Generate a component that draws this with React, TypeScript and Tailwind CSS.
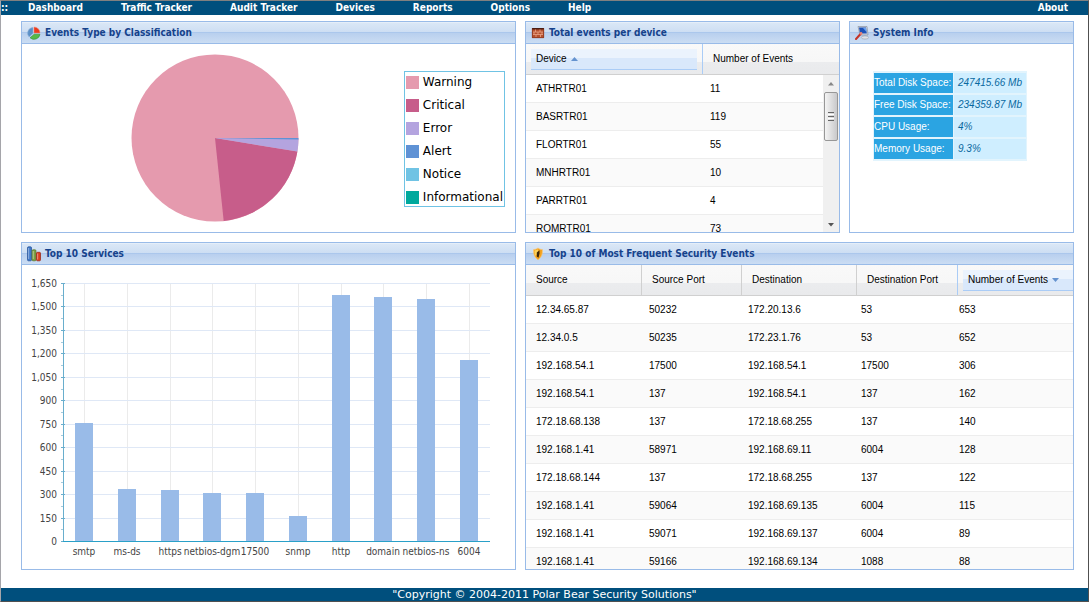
import type { ReactNode } from "react";
import clsx from "clsx";

const NAV = ["Dashboard", "Traffic Tracker", "Audit Tracker", "Devices", "Reports", "Options", "Help"];

const LEGEND = [
  { label: "Warning", color: "bg-[#e59aae]" },
  { label: "Critical", color: "bg-[#c75d8a]" },
  { label: "Error", color: "bg-[#b4a4df]" },
  { label: "Alert", color: "bg-[#5f92d5]" },
  { label: "Notice", color: "bg-[#70c3e4]" },
  { label: "Informational", color: "bg-[#00a99d]" },
];

const DEVICES = [
  ["ATHRTR01", 11],
  ["BASRTR01", 119],
  ["FLORTR01", 55],
  ["MNHRTR01", 10],
  ["PARRTR01", 4],
  ["ROMRTR01", 73],
];

const SYSTEM = [
  ["Total Disk Space:", "247415.66 Mb"],
  ["Free Disk Space:", "234359.87 Mb"],
  ["CPU Usage:", "4%"],
  ["Memory Usage:", "9.3%"],
];

const SERVICES = [
  { name: "smtp", value: 755 },
  { name: "ms-ds", value: 333 },
  { name: "https", value: 326 },
  { name: "netbios-dgm", value: 307 },
  { name: "17500", value: 307 },
  { name: "snmp", value: 160 },
  { name: "http", value: 1573 },
  { name: "domain", value: 1560 },
  { name: "netbios-ns", value: 1548 },
  { name: "6004", value: 1158 },
];

const EVENTS = [
  ["12.34.65.87", "50232", "172.20.13.6", "53", "653"],
  ["12.34.0.5", "50235", "172.23.1.76", "53", "652"],
  ["192.168.54.1", "17500", "192.168.54.1", "17500", "306"],
  ["192.168.54.1", "137", "192.168.54.1", "137", "162"],
  ["172.18.68.138", "137", "172.18.68.255", "137", "140"],
  ["192.168.1.41", "58971", "192.168.69.11", "6004", "128"],
  ["172.18.68.144", "137", "172.18.68.255", "137", "122"],
  ["192.168.1.41", "59064", "192.168.69.135", "6004", "115"],
  ["192.168.1.41", "59071", "192.168.69.137", "6004", "89"],
  ["192.168.1.41", "59166", "192.168.69.134", "1088", "88"],
];

function PieIcon() {
  return (
    <svg viewBox="0 0 14 14" className="h-3.5 w-3.5" aria-hidden="true">
      <path d="M6 1.5A5.6 5.6 0 0 0 2.2 11L6 7.2Z" fill="#5b8fc6" stroke="#8eb4dc" strokeWidth=".6" />
      <path d="M7 1v6h6A6 6 0 0 0 7 1Z" fill="#ea3a1e" stroke="#f58a72" strokeWidth=".5" />
      <path d="M7.2 8.2 3 11.8a6 6 0 0 0 10-3.6Z" fill="#55b948" stroke="#2f8a35" strokeWidth=".5" />
    </svg>
  );
}

function FirewallIcon() {
  return (
    <svg viewBox="0 0 14 14" className="h-3.5 w-3.5" aria-hidden="true">
      <path d="M1 2h12v10H1z" fill="#b5512f" />
      <path d="M1 2h12v1.5H1z" fill="#4a1d12" />
      <path d="M2 6h10M2 8.5h10M4.5 3.5V6M9 3.5V6M7 6v2.5M11 6v2.5M3 6v2.5M5 8.5V11M9.5 8.5V11" stroke="#eba387" strokeWidth=".8" />
      <path d="M1.3 2.3v9.4h11.4V2.3" fill="none" stroke="#7c2f1b" strokeWidth=".6" />
    </svg>
  );
}

function MonitorIcon() {
  return (
    <svg viewBox="0 0 14 14" className="h-3.5 w-3.5" aria-hidden="true">
      <path d="M3 .5h9l1 8.500H5Z" fill="#d5d9e2" stroke="#7d8696" strokeWidth=".6" />
      <path d="M4 1.500h7l.8 6H5Z" fill="#1c52b8" />
      <path d="M8 2h3l.5 4Z" fill="#69a3ef" />
      <ellipse cx="10" cy="11.5" rx="3.7" ry="1.6" fill="#dfe2e8" stroke="#8d94a1" strokeWidth=".5" />
      <path d="m1 13 4.5-5" stroke="#c43328" strokeWidth="2" strokeLinecap="round" />
      <circle cx="6" cy="7.4" r="1.4" fill="#e88478" />
    </svg>
  );
}

function BarsIcon() {
  return (
    <svg viewBox="0 0 14 16" className="h-4 w-3.5" aria-hidden="true">
      <rect x=".5" y=".8" width="4" height="14" rx="1" fill="#3f78c9" stroke="#234f93" strokeWidth=".7" />
      <rect x="5" y="3.8" width="4" height="11" rx="1" fill="#7d9f45" stroke="#56752b" strokeWidth=".7" />
      <rect x="9.5" y="6.3" width="4" height="8.5" rx="1" fill="#dc3d1c" stroke="#95230f" strokeWidth=".7" />
      <path d="M1.7 2v11M6.2 5v8M10.7 7.5v6" stroke="#fff" strokeOpacity=".45" />
    </svg>
  );
}

function ShieldIcon() {
  return (
    <svg viewBox="0 0 14 14" className="h-3.5 w-3.5" aria-hidden="true">
      <path d="M7 1c1.600 1.100 2.800 1.500 4.400 1.500.4 5-1.200 8.200-4.400 10.400C3.800 10.700 2.200 7.500 2.600 2.500 4.200 2.500 5.400 2.100 7 1Z" fill="#f2a01c" stroke="#f9c978" strokeWidth=".7" />
      <path d="M3.500 3.500C5 3.500 6 3 7 2.300V6L4.500 9C3.600 7.300 3.400 5.500 3.500 3.500Z" fill="#fcd15a" />
      <path d="M5.800 5.500 8.500 3.200V6.500L7.500 10.800 5.800 9.500Z" fill="#3b2508" />
    </svg>
  );
}

function Panel({ title, icon, className, children }: { title: string; icon: ReactNode; className?: string; children: ReactNode }) {
  return (
    <section className={clsx("flex min-w-0 flex-col overflow-hidden border border-[#99bbe8] bg-white", className)}>
      <header className="flex h-[22px] shrink-0 items-center gap-1 border-b border-[#99bbe8] bg-[linear-gradient(#f0f5fb_0,#dae7f6_1px,#cddef3_10px,#abc7ec_10px,#abc7ec_11px,#b8cfee_11px,#cbddf3_100%)] pl-[5px]">
        {icon}
        <h2 className="font-['DejaVu_Sans_Condensed','DejaVu_Sans',sans-serif] text-[10px] leading-4 font-bold whitespace-nowrap text-[#15428b]">
          {title}
        </h2>
      </header>
      {children}
    </section>
  );
}

function ColumnHeader({ label, sort }: { label: string; sort?: "asc" | "desc" }) {
  return (
    <th
      scope="col"
      aria-sort={sort === "asc" ? "ascending" : sort === "desc" ? "descending" : undefined}
      className={clsx(
        "flex items-center border-r px-[5px] font-normal last:border-r-0 last:pr-0",
        sort === "asc" ? "border-[#aaccf6]" : "border-[#d0d0d0] nth-4:border-[#aaccf6]",
      )}
    >
      <button
        type="button"
        className={clsx(
          "flex h-[21px] w-full items-center gap-1 border-b pl-[5px] text-left whitespace-nowrap",
          sort ? "border-[#aaccf6] bg-[linear-gradient(#ebf3fd_45%,#d9e8fb_45%)]" : "border-transparent",
        )}
      >
        {label}
        {sort && (
          <svg viewBox="0 0 7 4" className="h-1 w-[7px]" aria-hidden="true">
            <path d={sort === "asc" ? "M0 4 3.5 0 7 4Z" : "M0 0h7L3.5 4Z"} fill="#6593cf" />
          </svg>
        )}
      </button>
    </th>
  );
}

const headClass = "h-[31px] border-b border-[#d0d0d0] bg-[linear-gradient(#f9f9f9_0,#f7f7f7_60%,#ebecee_60%,#e9eaec_100%)]";
const rowClass = "h-7 items-center border-b border-[#ededed] even:bg-[#fafafa]";

function Pie() {
  return (
    <svg viewBox="0 0 168 168" className="h-[168px] w-[168px]" role="img" aria-label="Events by classification">
      <circle cx="84" cy="84" r="83.5" fill="#e59aae" />
      <path d="M84 84 166.4 97.5A83.5 83.5 0 0 1 92.7 167Z" fill="#c75d8a" />
      <path d="M84 84 167.5 85A83.5 83.5 0 0 1 166.4 97.5Z" fill="#b4a4df" />
      <path d="M84 84H167.5V85.5Z" fill="#5f92d5" />
    </svg>
  );
}

function ServicesChart() {
  const left = 41;
  const bottom = 276;
  const scale = 258 / 1650;
  const step = 42.7;
  const ticks = Array.from({ length: 12 }, (_, i) => i * 150);
  const y = (v: number) => Math.round(bottom - v * scale);
  const x = (i: number) => Math.round(left + step * (i + 0.5));

  return (
    <svg
      viewBox="0 0 493 304"
      preserveAspectRatio="xMinYMin"
      className="h-[304px] w-full font-['DejaVu_Sans_Condensed','DejaVu_Sans',sans-serif] text-[10px]"
      role="img"
      aria-label="Top 10 services"
    >
      <g shapeRendering="crispEdges">
        {SERVICES.map((s, i) => (
          <rect key={s.name} x={x(i)} y={18} width={1} height={258} fill="#ebebeb" />
        ))}
        {ticks.map((t) => (
          <g key={t}>
            <rect x={left} y={y(t)} width={427} height={1} fill="#dfe8f6" />
            <rect x={left - 2} y={y(t)} width={4} height={1} fill="#69aecd" />
            {t < 1650 && <rect x={left - 2} y={y(t + 75)} width={2} height={1} fill="#a5cbdc" />}
          </g>
        ))}
        {SERVICES.map((s, i) => (
          <rect key={s.name} x={x(i) - 9} y={y(s.value)} width={18} height={bottom - y(s.value)} fill="#99bbe8" />
        ))}
        <rect x={left} y={18} width={1} height={259} fill="#69aecd" />
        <rect x={left} y={bottom} width={427} height={1} fill="#2aa0c8" />
      </g>
      {ticks.map((t) => (
        <text key={t} x={left - 6} y={y(t) + 4} textAnchor="end" fill="#444">
          {t.toLocaleString("en-US")}
        </text>
      ))}
      {SERVICES.map((s, i) => (
        <text key={s.name} x={x(i)} y={290} textAnchor="middle" fill="#444">
          {s.name}
        </text>
      ))}
    </svg>
  );
}

function Scrollbar() {
  return (
    <div className="absolute top-[31px] right-0 bottom-0 flex w-4 flex-col items-center bg-[#f0f0f0]" aria-hidden="true">
      <svg viewBox="0 0 16 17" className="h-[17px] w-4">
        <path d="M5 10.5 8 7l3 3.5Z" fill="#888" />
      </svg>
      <div className="flex h-[49px] w-3.5 flex-col items-center justify-center gap-px rounded-xs border border-[#979797] bg-linear-to-r from-[#f4f4f4] to-[#c9c9cb]">
        <span className="h-px w-1.5 bg-[#666]" />
        <span className="h-px w-1.5 bg-white" />
        <span className="h-px w-1.5 bg-[#666]" />
        <span className="h-px w-1.5 bg-white" />
        <span className="h-px w-1.5 bg-[#666]" />
      </div>
      <svg viewBox="0 0 16 17" className="mt-auto h-[17px] w-4">
        <path d="M5 8 8 11.5 11 8Z" fill="#555" />
      </svg>
    </div>
  );
}

function DeviceTable() {
  return (
    <div className="relative min-h-0 flex-1 overflow-hidden">
      <table className="block">
        <thead className="block">
          <tr className={clsx("grid grid-cols-[177fr_136fr]", headClass)}>
            <ColumnHeader label="Device" sort="asc" />
            <ColumnHeader label="Number of Events" />
          </tr>
        </thead>
        <tbody className="block pr-4">
          {DEVICES.map(([name, count]) => (
            <tr key={name} className={clsx("grid grid-cols-[174fr_123fr]", rowClass)}>
              <td className="pl-2.5">{name}</td>
              <td className="pl-2.5">{count}</td>
            </tr>
          ))}
        </tbody>
      </table>
      <Scrollbar />
    </div>
  );
}

function EventsTable() {
  return (
    <table className="block min-h-0 flex-1 overflow-hidden">
      <thead className="block">
        <tr className={clsx("grid grid-cols-[116fr_100fr_115fr_101fr_115fr]", headClass)}>
          <ColumnHeader label="Source" />
          <ColumnHeader label="Source Port" />
          <ColumnHeader label="Destination" />
          <ColumnHeader label="Destination Port" />
          <ColumnHeader label="Number of Events" sort="desc" />
        </tr>
      </thead>
      <tbody className="block">
        {EVENTS.map((row, i) => (
          <tr key={i} className={clsx("grid grid-cols-[113fr_99fr_113fr_98fr_124fr]", rowClass)}>
            {row.map((cell, j) => (
              <td key={j} className="pl-2.5">
                {cell}
              </td>
            ))}
          </tr>
        ))}
      </tbody>
    </table>
  );
}

export default function App() {
  return (
    <div className="flex min-h-screen flex-col border border-t-[#808080] border-r-[#505050] border-b-[#505050] border-l-[#a5a5aa] bg-white font-['Liberation_Sans',Arial,sans-serif] text-[10px] leading-4 text-black">
      <nav className="flex h-3.5 items-center bg-[#004f7d] pr-5 font-['DejaVu_Sans_Condensed','DejaVu_Sans',sans-serif] font-bold whitespace-nowrap text-white">
        <span className="w-[27px]">::</span>
        <div className="flex gap-[38px]">
          {NAV.map((item) => (
            <a key={item} href="#">
              {item}
            </a>
          ))}
        </div>
        <a href="#" className="ml-auto">
          About
        </a>
      </nav>

      <main className="grid grid-cols-[495fr_549fr] gap-[9px] py-1.5 pr-3.5 pl-5">
        <Panel title="Events Type by Classification" icon={<PieIcon />} className="h-[212px]">
          <div className="flex flex-1 items-start justify-between pt-2.5 pr-2.5 pl-[109px]">
            <Pie />
            <ul className="mt-[17px] flex flex-col gap-2 border border-[#70c3e4] px-px pt-[3px] pb-px font-['DejaVu_Sans',Verdana,sans-serif] text-xs leading-[15px]">
              {LEGEND.map((l) => (
                <li key={l.label} className="flex items-center gap-1">
                  <span className={clsx("h-[13px] w-[13px]", l.color)} />
                  {l.label}
                </li>
              ))}
            </ul>
          </div>
        </Panel>

        <div className="grid grid-cols-[315fr_225fr] gap-[9px]">
          <Panel title="Total events per device" icon={<FirewallIcon />} className="h-[212px]">
            <DeviceTable />
          </Panel>
          <Panel title="System Info" icon={<MonitorIcon />} className="h-[212px]">
            <table className="mt-[27px] ml-[23px] w-[154px] border-separate border-spacing-x-px border-spacing-y-0.5 bg-[#e2f4fd]">
              <tbody>
                {SYSTEM.map(([label, value]) => (
                  <tr key={label} className="h-5">
                    <th scope="row" className="w-[79px] bg-[#2ba4e2] text-left font-normal whitespace-nowrap text-white">
                      {label}
                    </th>
                    <td className="bg-[#cfeeff] pl-1 whitespace-nowrap text-[#0868a0] italic">{value}</td>
                  </tr>
                ))}
              </tbody>
            </table>
          </Panel>
        </div>

        <Panel title="Top 10 Services" icon={<BarsIcon />} className="h-[328px]">
          <ServicesChart />
        </Panel>
        <Panel title="Top 10 of Most Frequent Security Events" icon={<ShieldIcon />} className="h-[328px]">
          <EventsTable />
        </Panel>
      </main>

      <footer className="mt-auto bg-[#004f7d] text-center font-['DejaVu_Sans',Verdana,sans-serif] text-[11px] leading-[13px] text-white">
        "Copyright © 2004-2011 Polar Bear Security Solutions"
      </footer>
    </div>
  );
}
